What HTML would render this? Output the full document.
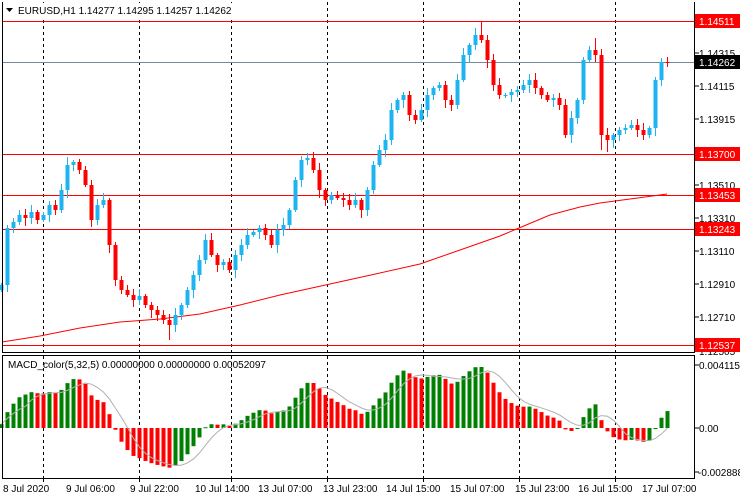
<!DOCTYPE html>
<html><head><meta charset="utf-8"><style>
html,body{margin:0;padding:0;background:#fff;}
#w{position:relative;width:740px;height:500px;overflow:hidden;font-family:"Liberation Sans",sans-serif;}
svg{position:absolute;left:0;top:0;}
</style></head><body><div id="w">
<svg id="s" width="740" height="500" xmlns="http://www.w3.org/2000/svg" font-family="Liberation Sans, sans-serif" font-size="10">
<rect x="0" y="0" width="740" height="500" fill="#fff"/>
<g stroke="#000" stroke-width="1" stroke-dasharray="3,3">
<line x1="43.5" y1="2" x2="43.5" y2="478"/>
<line x1="139.5" y1="2" x2="139.5" y2="478"/>
<line x1="231.5" y1="2" x2="231.5" y2="478"/>
<line x1="327.5" y1="2" x2="327.5" y2="478"/>
<line x1="423.5" y1="2" x2="423.5" y2="478"/>
<line x1="519.5" y1="2" x2="519.5" y2="478"/>
<line x1="615.5" y1="2" x2="615.5" y2="478"/>
</g>
<rect x="2" y="353" width="692" height="2" fill="#fff"/>
<polyline fill="none" stroke="#ff0000" stroke-width="1" points="2,342 40,336 80,328 120,322 160,319 200,314 240,305 280,295 330,284 380,273 420,264 460,250 500,236 519,228 550,215 580,207 600,203 630,199 667,194"/>
<g stroke-width="1">
<line x1="2" y1="21.5" x2="694" y2="21.5" stroke="#ff0000"/>
<line x1="2" y1="62.5" x2="694" y2="62.5" stroke="#778899"/>
<line x1="2" y1="154.5" x2="694" y2="154.5" stroke="#ff0000"/>
<line x1="2" y1="195.5" x2="694" y2="195.5" stroke="#ff0000"/>
<line x1="2" y1="229.5" x2="694" y2="229.5" stroke="#ff0000"/>
<line x1="2" y1="345.5" x2="694" y2="345.5" stroke="#ff0000"/>
</g>
<g id="candles"></g>
<g id="macd"></g>
<polyline id="sig" fill="none" stroke="#b0b0b0" stroke-width="1" points=""/>
<g stroke="#000" fill="none" stroke-width="1">
<line x1="2.5" y1="2" x2="2.5" y2="352"/>
<line x1="694.5" y1="2" x2="694.5" y2="352"/>
<line x1="2" y1="352.5" x2="695" y2="352.5"/>
<line x1="2" y1="355.5" x2="695" y2="355.5"/>
<line x1="2.5" y1="355" x2="2.5" y2="478"/>
<line x1="694.5" y1="355" x2="694.5" y2="478"/>
<line x1="2" y1="478.5" x2="695" y2="478.5"/>
</g>
<g stroke="#000" stroke-width="1">
<line x1="695" y1="53" x2="699" y2="53"/><line x1="695" y1="86" x2="699" y2="86"/><line x1="695" y1="119" x2="699" y2="119"/><line x1="695" y1="185" x2="699" y2="185"/><line x1="695" y1="218" x2="699" y2="218"/><line x1="695" y1="251" x2="699" y2="251"/><line x1="695" y1="284" x2="699" y2="284"/><line x1="695" y1="317" x2="699" y2="317"/>
<line x1="695" y1="365" x2="699" y2="365"/><line x1="695" y1="428" x2="699" y2="428"/><line x1="695" y1="472" x2="699" y2="472"/>
<line x1="43.5" y1="478" x2="43.5" y2="482"/><line x1="139.5" y1="478" x2="139.5" y2="482"/><line x1="231.5" y1="478" x2="231.5" y2="482"/><line x1="327.5" y1="478" x2="327.5" y2="482"/><line x1="423.5" y1="478" x2="423.5" y2="482"/><line x1="519.5" y1="478" x2="519.5" y2="482"/><line x1="615.5" y1="478" x2="615.5" y2="482"/>
</g>
<g fill="#000">
<text x="699" y="57">1.14315</text>
<text x="699" y="90">1.14115</text>
<text x="699" y="123">1.13915</text>
<text x="699" y="189">1.13510</text>
<text x="699" y="222">1.13310</text>
<text x="699" y="255">1.13110</text>
<text x="699" y="288">1.12910</text>
<text x="699" y="321">1.12710</text>
<text x="699" y="355">1.12505</text>
</g>
<g>
<rect x="695" y="14" width="45" height="14" fill="#ff0000"/><text x="699" y="25" fill="#fff">1.14511</text>
<rect x="695" y="55" width="45" height="14" fill="#000"/><text x="699" y="66" fill="#fff">1.14262</text>
<rect x="695" y="147" width="45" height="14" fill="#ff0000"/><text x="699" y="158" fill="#fff">1.13700</text>
<rect x="695" y="188" width="45" height="14" fill="#ff0000"/><text x="699" y="199" fill="#fff">1.13453</text>
<rect x="695" y="222" width="45" height="14" fill="#ff0000"/><text x="699" y="233" fill="#fff">1.13243</text>
<rect x="695" y="338" width="45" height="14" fill="#ff0000"/><text x="699" y="349" fill="#fff">1.12537</text>
</g>
<g fill="#000">
<text x="699" y="369">0.0041151</text>
<text x="699" y="432">0.00</text>
<text x="698" y="476">-0.002888</text>
</g>
<g fill="#000">
<text x="3" y="492">8 Jul 2020</text>
<text x="66" y="492">9 Jul 06:00</text>
<text x="130" y="492">9 Jul 22:00</text>
<text x="195" y="492">10 Jul 14:00</text>
<text x="258" y="492">13 Jul 07:00</text>
<text x="323" y="492">13 Jul 23:00</text>
<text x="386" y="492">14 Jul 15:00</text>
<text x="450" y="492">15 Jul 07:00</text>
<text x="515" y="492">15 Jul 23:00</text>
<text x="578" y="492">16 Jul 15:00</text>
<text x="642" y="492">17 Jul 07:00</text>
</g>
<rect x="4" y="3" width="228" height="15" fill="#fff"/>
<path d="M6,8 L13,8 L9.5,12 Z" fill="#000"/>
<text x="18" y="14" fill="#000">EURUSD,H1  1.14277 1.14295 1.14257 1.14262</text>
<text x="8" y="368" fill="#000">MACD_color(5,32,5) 0.00000000 0.00000000 0.00052097</text>
</svg>
</div>
<script>
(function(){
var c=[285,228,222,215,218,212,220,215,205,210,190,165,162,170,185,220,205,200,245,280,290,295,300,296,305,310,315,320,325,315,305,290,275,260,240,255,265,262,270,255,245,235,232,228,235,245,230,225,210,180,160,158,170,190,200,195,198,200,205,200,210,190,165,150,140,110,100,95,115,120,110,95,88,85,100,105,80,55,45,35,40,60,85,95,95,92,90,85,80,88,95,100,98,105,135,118,100,60,50,55,135,140,135,130,128,125,130,135,128,80,62,63];
var NS="http://www.w3.org/2000/svg";
function el(t,a){var e=document.createElementNS(NS,t);for(var k in a)e.setAttribute(k,String(a[k]));return e;}
var g=document.getElementById('candles');
for(var i=0;i<c.length;i++){
 var o=i==0?290:c[i-1],cl=c[i];
 if(Math.abs(o-cl)<1){o=cl+1;}
 var tp=Math.min(o,cl),bt=Math.max(o,cl);
 var hi=tp-(2+(i*7)%6),lo=bt+(2+(i*5)%7);
 if(i==11)hi=157; if(i==28)lo=340; if(i==80)hi=21; if(i==79)hi=28; if(i==99)hi=38; if(i==101)lo=152; if(i==100)lo=150;
 var up=cl<o,col=up?'#1eb4f0':'#ff0000',x=1+6*i;
 g.appendChild(el('line',{x1:x+0.5,y1:hi,x2:x+0.5,y2:lo,stroke:col,'stroke-width':1}));
 g.appendChild(el('rect',{x:x-1.5,y:tp,width:4,height:Math.max(1,bt-tp),fill:col}));
}
var pre=[];for(var j=0;j<40;j++)pre.push(300-j*0.5);
var p=pre.concat(c).map(function(v){return -v;});
function ema(a,n){var k=2/(n+1),r=[a[0]];for(var i=1;i<a.length;i++)r.push(a[i]*k+r[i-1]*(1-k));return r;}
var e5=ema(p,5),e32=ema(p,32),m=[];for(var i=0;i<p.length;i++)m.push(e5[i]-e32[i]);
m=m.slice(40);
var mx=0,mn=0;m.forEach(function(v){mx=Math.max(mx,v);mn=Math.min(mn,v);});
var sc=Math.min(61/mx,45/(-mn));
var mg=document.getElementById('macd'),pts=[];
for(var i=0;i<m.length;i++){
 var h=m[i]*sc,x=1+6*i,col=(i==0||m[i]>=m[i-1])?'#008000':'#ff0000';
 var y0=428,yy=h>0?y0-h:y0;mg.appendChild(el('rect',{x:x-1.5,y:yy,width:4,height:Math.max(1,Math.abs(h)),fill:col}));
 var s=0,n=0;for(var k=Math.max(0,i-4);k<=i;k++){s+=m[k];n++;}
 pts.push((x+0.5)+','+(428-s/n*sc));
}
document.getElementById('sig').setAttribute('points',pts.join(' '));
})();
</script>
</body></html>
